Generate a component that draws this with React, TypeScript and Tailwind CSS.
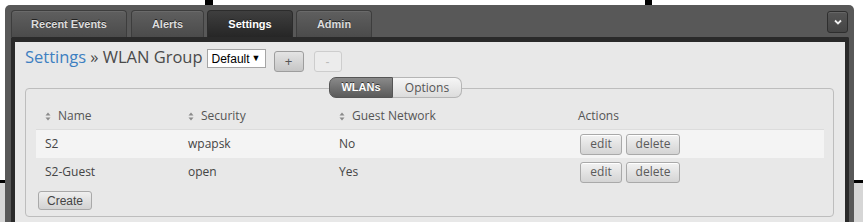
import React from "react"

const TABS = [
  { label: "Recent Events", w: "w-[116px]", active: false },
  { label: "Alerts", w: "w-[73px]", active: false },
  { label: "Settings", w: "w-[86px]", active: true },
  { label: "Admin", w: "w-[76px]", active: false },
]

const ROWS = [
  { name: "S2", security: "wpapsk", guest: "No" },
  { name: "S2-Guest", security: "open", guest: "Yes" },
]

function SortIcon() {
  return (
    <svg width="6" height="9" viewBox="0 0 6 9" className="mr-[7px] shrink-0">
      <path d="M3 0.5 L5.5 3.5 H0.5 Z" fill="#8a8a8a" />
      <path d="M3 8.5 L5.5 5.5 H0.5 Z" fill="#8a8a8a" />
    </svg>
  )
}

function SmallButton({ children, w }: { children: React.ReactNode; w: string }) {
  return (
    <button
      className={`${w} h-[21px] rounded-[3px] border border-[#a9a9a9] bg-gradient-to-b from-[#f2f2f2] to-[#d4d4d4] text-[12px] leading-none text-[#5a5a5a] shadow-[inset_0_1px_0_#fff]`}
    >
      {children}
    </button>
  )
}

export default function App() {
  return (
    <div className="relative h-[222px] w-[863px] overflow-hidden bg-white font-['Open_Sans',sans-serif]">
      {/* page behind the panel */}
      <div className="absolute left-[205px] top-0 h-[6px] w-[8px] bg-black" />
      <div className="absolute left-[645px] top-0 h-[6px] w-[7px] bg-black" />
      <div className="absolute left-0 top-[180px] h-[42px] w-[6px] border-t-[3px] border-black bg-[#d6d6d6]" />
      <div className="absolute right-0 top-[180px] h-[42px] w-[9px] border-t-[3px] border-black bg-[#d6d6d6]" />

      <div className="relative ml-[5px] mt-[5px] flex h-[217px] w-[849px] flex-col rounded-t-[5px] bg-[#585858] pl-[6px] pr-[5px] pt-[5px]">
        {/* Top tabs */}
        <div className="flex h-[27px] shrink-0 items-start">
          <div className="flex h-[27px] gap-[3px]">
            {TABS.map((t, i) => (
              <div
                key={t.label}
                className={`${t.w} ${i === 0 ? "mr-[1px]" : ""} flex h-[27px] items-center justify-center rounded-t-[4px] border border-b-0 font-['Liberation_Sans',Arial,sans-serif] text-[11px] font-bold [text-shadow:0_-1px_0_#222] ${
                  t.active
                    ? "border-[#2c2c2c] bg-gradient-to-b from-[#3f3f3f] to-[#262626] text-white"
                    : "border-[#3d3d3d] bg-gradient-to-b from-[#5f5f5f] to-[#4b4b4b] text-[#dcdcdc] shadow-[inset_0_1px_0_#6a6a6a]"
                }`}
              >
                {t.label}
              </div>
            ))}
          </div>
          <button className="ml-auto mr-[1px] mt-[1px] flex h-[22px] w-[21px] items-center justify-center rounded-[3px] border border-[#2e2e2e] bg-gradient-to-b from-[#555] to-[#454545] shadow-[inset_0_1px_0_#666]">
            <svg width="8" height="6" viewBox="0 0 8 6">
              <polyline points="1,1.5 4,4.5 7,1.5" fill="none" stroke="#f0f0f0" strokeWidth="1.8" />
            </svg>
          </button>
        </div>

        {/* Content */}
        <div className="flex-1 rounded-t-[2px] border-x-4 border-t-[5px] border-[#2a2a2a] bg-[#e8e8e8] pl-[10px] pr-[11px]">
          {/* Heading */}
          <div className="flex h-[30px] items-start">
            <h1 className="mt-[4px] text-[16.5px] leading-[22px] text-[#4a4a4a]">
              <a className="text-[#3d7fc1]">Settings</a>
              <span className="ml-[4px]">» WLAN Group</span>
            </h1>
            <div className="ml-[4px] mt-[7px] flex h-[19px] w-[59px] items-center justify-between border border-[#a5a5a5] bg-white pl-[4px] pr-[4px] font-['Liberation_Sans',Arial,sans-serif] text-[12px] text-black">
              <span>Default</span>
              <span className="text-[9px]">▼</span>
            </div>
            <button className="ml-[8px] mt-[9px] h-[21px] w-[30px] rounded-[3px] border border-[#9d9d9d] bg-gradient-to-b from-[#e4e4e4] to-[#c6c6c6] font-['Liberation_Sans',Arial,sans-serif] text-[13px] leading-none text-[#555]">
              +
            </button>
            <button className="ml-[10px] mt-[9px] h-[21px] w-[28px] rounded-[3px] border border-[#cdcdcd] bg-[#ececec] font-['Liberation_Sans',Arial,sans-serif] text-[12px] leading-none text-[#bbb]">
              -
            </button>
          </div>

          {/* Segmented tabs */}
          <div className="relative z-10 ml-[304px] mt-[5px] flex h-[21px] w-[133px]">
            <div className="flex w-[64px] items-center justify-center rounded-l-[7px] border border-[#555] bg-gradient-to-b from-[#8a8a8a] to-[#5a5a5a] font-['Liberation_Sans',Arial,sans-serif] text-[11px] font-bold text-white [text-shadow:0_-1px_0_#333]">
              WLANs
            </div>
            <div className="flex w-[69px] items-center justify-center rounded-r-[7px] border border-l-0 border-[#b5b5b5] bg-gradient-to-b from-[#f6f6f6] to-[#dcdcdc] text-[12px] text-[#555]">
              Options
            </div>
          </div>

          {/* Fieldset */}
          <div className="-mt-[10px] rounded-[4px] border border-[#bdbdbd] pb-[5px] pl-[10px] pr-[9px] pt-[14px]">
            <div className="text-[12px] text-[#555]">
              <div className="flex h-[26px] items-center">
                <div className="flex w-[143px] items-center pl-[9px]">
                  <SortIcon />
                  Name
                </div>
                <div className="flex w-[151px] items-center pl-[9px]">
                  <SortIcon />
                  Security
                </div>
                <div className="flex w-[239px] items-center pl-[9px]">
                  <SortIcon />
                  Guest Network
                </div>
                <div className="flex-1 pl-[9px]">Actions</div>
              </div>
              {ROWS.map((r, i) => (
                <div
                  key={r.name}
                  className={`flex items-center text-[#444] ${
                    i === 0 ? "h-[29px] border-t border-[#dcdcdc] bg-[#f4f4f4]" : "h-[28px]"
                  }`}
                >
                  <div className="w-[143px] pl-[9px]">{r.name}</div>
                  <div className="w-[151px] pl-[9px]">{r.security}</div>
                  <div className="w-[239px] pl-[9px]">{r.guest}</div>
                  <div className="flex flex-1 gap-[4px] pl-[11px]">
                    <SmallButton w="w-[42px]">edit</SmallButton>
                    <SmallButton w="w-[54px]">delete</SmallButton>
                  </div>
                </div>
              ))}
            </div>
            <button className="ml-[2px] mt-[5px] h-[19px] w-[54px] rounded-[3px] border border-[#a9a9a9] bg-gradient-to-b from-[#efefef] to-[#d2d2d2] font-['Liberation_Sans',Arial,sans-serif] text-[12px] leading-none text-[#444]">
              Create
            </button>
          </div>
        </div>
      </div>
    </div>
  )
}
